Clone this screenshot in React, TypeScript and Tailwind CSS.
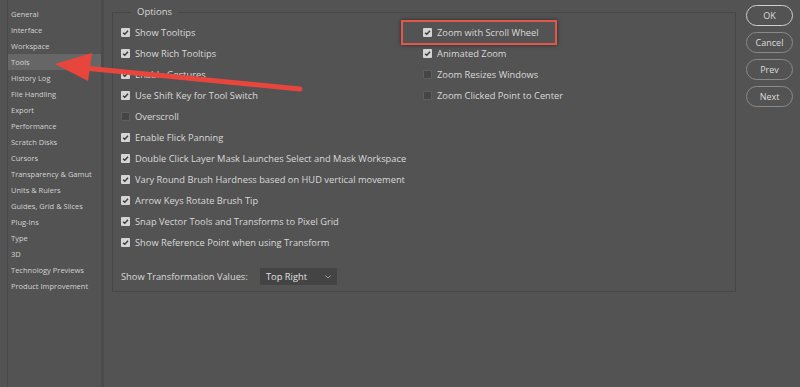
import React from 'react';

const SIDEBAR = [
  'General',
  'Interface',
  'Workspace',
  'Tools',
  'History Log',
  'File Handling',
  'Export',
  'Performance',
  'Scratch Disks',
  'Cursors',
  'Transparency & Gamut',
  'Units & Rulers',
  'Guides, Grid & Slices',
  'Plug-Ins',
  'Type',
  '3D',
  'Technology Previews',
  'Product Improvement',
];

const LEFT_OPTIONS: [string, boolean][] = [
  ['Show Tooltips', true],
  ['Show Rich Tooltips', true],
  ['Enable Gestures', true],
  ['Use Shift Key for Tool Switch', true],
  ['Overscroll', false],
  ['Enable Flick Panning', true],
  ['Double Click Layer Mask Launches Select and Mask Workspace', true],
  ['Vary Round Brush Hardness based on HUD vertical movement', true],
  ['Arrow Keys Rotate Brush Tip', true],
  ['Snap Vector Tools and Transforms to Pixel Grid', true],
  ['Show Reference Point when using Transform', true],
];

const RIGHT_OPTIONS: [string, boolean][] = [
  ['Zoom with Scroll Wheel', true],
  ['Animated Zoom', true],
  ['Zoom Resizes Windows', false],
  ['Zoom Clicked Point to Center', false],
];

const Check = ({ on }: { on: boolean }) =>
  on ? (
    <span className="w-[9px] h-[9px] rounded-[1px] bg-[#d4d4d4] flex items-center justify-center shrink-0">
      <svg width="7" height="7" viewBox="0 0 10 10">
        <path d="M1.5 5.2 L4 7.6 L8.6 2.4" fill="none" stroke="#3a3a3a" strokeWidth="2" />
      </svg>
    </span>
  ) : (
    <span className="w-[9px] h-[9px] rounded-[1px] bg-[#454545] border border-[#5e5e5e] shrink-0" />
  );

const Option = ({ label, on }: { label: string; on: boolean }) => (
  <div className="h-[21px] flex items-center gap-[5px]">
    <Check on={on} />
    <span>{label}</span>
  </div>
);

const Btn = ({ label, primary }: { label: string; primary?: boolean }) => (
  <button
    className={`w-[47px] h-[21px] rounded-full border text-[9px] text-[#dcdcdc] ${
      primary ? 'border-[#cfcfcf] border-[1.5px]' : 'border-[#8a8a8a]'
    }`}
  >
    {label}
  </button>
);

export default function App() {
  return (
    <div
      className="relative w-[800px] h-[387px] bg-[#535353] text-[#dadada] flex overflow-hidden"
      style={{ fontFamily: '"Open Sans", "Liberation Sans", sans-serif' }}
    >
      {/* sidebar */}
      <div className="ml-[7px] w-[97px] h-full border-l border-r-[3px] border-l-[#4a4a4a] border-r-[#4b4b4b] pt-[6px] text-[7.5px] text-[#d2d2d2]">
        {SIDEBAR.map((s) => (
          <div
            key={s}
            className={`h-[16px] leading-[16px] pl-[3px] ${s === 'Tools' ? 'bg-[#666666]' : ''}`}
          >
            {s}
          </div>
        ))}
      </div>

      {/* options */}
      <div className="flex-1 pl-[8px] pr-[10px] pt-[6px]">
        <fieldset className="border border-[#474747] h-[286px] pl-[8px] pt-[4px]">
          <legend className="ml-[10px] px-[6px] text-[9.5px] text-[#d8d8d8] leading-[12px]">Options</legend>
          <div className="flex text-[9.3px]">
            <div className="w-[302px]">
              {LEFT_OPTIONS.map(([l, on]) => (
                <Option key={l} label={l} on={on} />
              ))}
            </div>
            <div>
              {RIGHT_OPTIONS.map(([l, on]) => (
                <Option key={l} label={l} on={on} />
              ))}
            </div>
          </div>
          <div className="mt-[15px] flex items-center text-[9.3px]">
            <span className="w-[139px]">Show Transformation Values:</span>
            <div className="w-[77px] h-[17px] bg-[#444444] flex items-center justify-between px-[6px] text-[#e0e0e0]">
              <span>Top Right</span>
              <svg width="6" height="4" viewBox="0 0 6 4">
                <path d="M0.5 0.5 L3 3 L5.5 0.5" fill="none" stroke="#9a9a9a" strokeWidth="1" />
              </svg>
            </div>
          </div>
        </fieldset>
      </div>

      {/* buttons */}
      <div className="w-[54px] pt-[5px] flex flex-col gap-[6px] pr-[7px]">
        <Btn label="OK" primary />
        <Btn label="Cancel" />
        <Btn label="Prev" />
        <Btn label="Next" />
      </div>

      {/* annotation highlight box */}
      <div className="absolute left-[401px] top-[20px] w-[156px] h-[25px] border-2 border-[#e2564c] shadow-[0_0_4px_rgba(0,0,0,0.5)] pointer-events-none" />

      {/* annotation arrow */}
      <svg className="absolute left-0 top-0 pointer-events-none" width="800" height="387">
        <line x1="300" y1="89" x2="84" y2="68" stroke="#e8463c" strokeWidth="5" strokeLinecap="round" />
        <polygon points="55,64 92,53 88,81" fill="#e8463c" />
      </svg>
    </div>
  );
}
